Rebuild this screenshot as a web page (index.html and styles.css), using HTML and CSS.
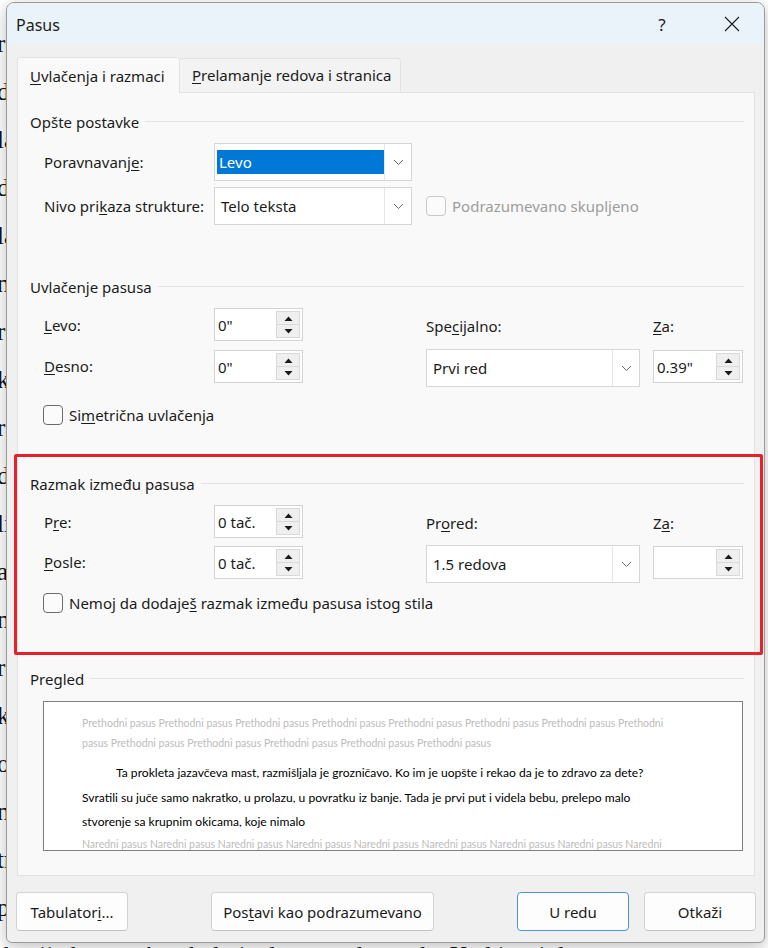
FILE: index.html
```html
<!DOCTYPE html>
<html lang="sr">
<head>
<meta charset="utf-8">
<title>Pasus</title>
<link rel="stylesheet" href="styles.css">
</head>
<body>
<div class="doc">
  <div>rođena, znala je to. Otišli su da vide bebu u nedelju po podne,</div>
  <div>dok je sunce još bilo visoko nad krovovima kuća u ulici.</div>
  <div>lako, kao da to nije ništa, a ona je sve vreme ćutala.</div>
  <div>dugo je posle gledala kroz prozor i razmišljala o svemu.</div>
  <div>la je da će sve proći, da je to samo obična prehlada.</div>
  <div>ne, rekla je, nije to ništa strašno, proći će do jutra.</div>
  <div>reka je tekla sporo ispod mosta, mutna i hladna.</div>
  <div>kasno je stigla kući, umorna i zabrinuta za dete.</div>
  <div>rano ujutru je ustala i odmah otišla do kolevke.</div>
  <div>dete je spavalo mirno, ali je disalo teško i brzo.</div>
  <div>lice mu je bilo crveno i vrelo pod njenom rukom.</div>
  <div>a onda je shvatila da mora odmah nešto da uradi.</div>
  <div>nije bilo nikoga da pita za savet, bila je sama.</div>
  <div>rekla je sebi da ne sme da se uplaši, ne sada.</div>
  <div>kao da je neko drugi umesto nje donosio odluke.</div>
  <div>obukla je dete toplo i umotala ga u ćebe.</div>
  <div>napolju je duvao vetar i padala je sitna kiša.</div>
  <div>trebalo je stići do lekara pre nego što bude kasno.</div>
  <div>put je bio dug, a autobus je kasnio kao i uvek.</div>
  <div>da nije kasno. A trebalo je dva sata do grada. Kad je stigla</div>
</div>

<div class="dialog">
  <div class="titlebar">
    <span class="title">Pasus</span>
    <span class="help">?</span>
    <span class="close">
      <svg width="18" height="18" viewBox="0 0 18 18"><path d="M2 2 L16 16 M16 2 L2 16" stroke="#1b1b1b" stroke-width="1.1" fill="none"/></svg>
    </span>
  </div>

  <div class="body">
    <div class="tabs">
      <div class="tab active"><u>U</u>vlačenja i razmaci</div>
      <div class="tab"><u>P</u>relamanje redova i stranica</div>
    </div>

    <div class="panel">
      <!-- Opšte postavke -->
      <div class="ghead g1h"><span>Opšte postavke</span></div>
      <div class="row r38 g1a">
        <span class="lbl">Poravnavanj<u>e</u>:</span>
        <div class="combo c198 c-span">
          <span class="val"><span class="selected">Levo</span></span>
          <span class="drop"><svg width="11" height="7" viewBox="0 0 11 7"><path d="M1 1 L5.5 5.5 L10 1" stroke="#6a6a6a" stroke-width="1" fill="none"/></svg></span>
        </div>
      </div>
      <div class="row r38 g1b">
        <span class="lbl">Nivo pri<u>k</u>aza strukture:</span>
        <div class="combo c198 c-span">
          <span class="val">Telo teksta</span>
          <span class="drop"><svg width="11" height="7" viewBox="0 0 11 7"><path d="M1 1 L5.5 5.5 L10 1" stroke="#6a6a6a" stroke-width="1" fill="none"/></svg></span>
        </div>
        <label class="chk disabled wide4"><span class="box"></span><span class="ctext">Podrazumevano skupljeno</span></label>
      </div>

      <!-- Uvlačenje pasusa -->
      <div class="ghead g2h"><span>Uvlačenje pasusa</span></div>
      <div class="row r33 g2a">
        <span class="lbl"><u>L</u>evo:</span>
        <div class="spin s89">
          <span class="sval">0"</span>
          <span class="sbtns">
            <span class="sb"><svg width="9" height="5" viewBox="0 0 9 5"><path d="M0.5 5 L4.5 0.5 L8.5 5 Z" fill="#1b1b1b"/></svg></span>
            <span class="sb"><svg width="9" height="5" viewBox="0 0 9 5"><path d="M0.5 0 L4.5 4.5 L8.5 0 Z" fill="#1b1b1b"/></svg></span>
          </span>
        </div>
        <span class="lbl c4 hl">Spe<u>c</u>ijalno:</span>
        <span class="lbl c6 hl"><u>Z</u>a:</span>
      </div>
      <div class="row r38 g2b">
        <span class="lbl up"><u>D</u>esno:</span>
        <div class="spin s89 top1">
          <span class="sval">0"</span>
          <span class="sbtns">
            <span class="sb"><svg width="9" height="5" viewBox="0 0 9 5"><path d="M0.5 5 L4.5 0.5 L8.5 5 Z" fill="#1b1b1b"/></svg></span>
            <span class="sb"><svg width="9" height="5" viewBox="0 0 9 5"><path d="M0.5 0 L4.5 4.5 L8.5 0 Z" fill="#1b1b1b"/></svg></span>
          </span>
        </div>
        <div class="combo c214 c4">
          <span class="val">Prvi red</span>
          <span class="drop"><svg width="11" height="7" viewBox="0 0 11 7"><path d="M1 1 L5.5 5.5 L10 1" stroke="#6a6a6a" stroke-width="1" fill="none"/></svg></span>
        </div>
        <div class="spin s90 top1 c6">
          <span class="sval">0.39"</span>
          <span class="sbtns">
            <span class="sb"><svg width="9" height="5" viewBox="0 0 9 5"><path d="M0.5 5 L4.5 0.5 L8.5 5 Z" fill="#1b1b1b"/></svg></span>
            <span class="sb"><svg width="9" height="5" viewBox="0 0 9 5"><path d="M0.5 0 L4.5 4.5 L8.5 0 Z" fill="#1b1b1b"/></svg></span>
          </span>
        </div>
      </div>
      <div class="row r20 g2c">
        <label class="chk chk-row"><span class="box"></span><span class="ctext">Si<u>m</u>etrična uvlačenja</span></label>
      </div>

      <!-- Razmak između pasusa -->
      <div class="ghead g3h"><span>Razmak između pasusa</span></div>
      <div class="row r33 g3a">
        <span class="lbl">P<u>r</u>e:</span>
        <div class="spin s89">
          <span class="sval">0 tač.</span>
          <span class="sbtns">
            <span class="sb"><svg width="9" height="5" viewBox="0 0 9 5"><path d="M0.5 5 L4.5 0.5 L8.5 5 Z" fill="#1b1b1b"/></svg></span>
            <span class="sb"><svg width="9" height="5" viewBox="0 0 9 5"><path d="M0.5 0 L4.5 4.5 L8.5 0 Z" fill="#1b1b1b"/></svg></span>
          </span>
        </div>
        <span class="lbl c4 hl">Pr<u>o</u>red:</span>
        <span class="lbl c6 hl">Z<u>a</u>:</span>
      </div>
      <div class="row r38 g3b">
        <span class="lbl up"><u>P</u>osle:</span>
        <div class="spin s89 top1">
          <span class="sval">0 tač.</span>
          <span class="sbtns">
            <span class="sb"><svg width="9" height="5" viewBox="0 0 9 5"><path d="M0.5 5 L4.5 0.5 L8.5 5 Z" fill="#1b1b1b"/></svg></span>
            <span class="sb"><svg width="9" height="5" viewBox="0 0 9 5"><path d="M0.5 0 L4.5 4.5 L8.5 0 Z" fill="#1b1b1b"/></svg></span>
          </span>
        </div>
        <div class="combo c214 c4">
          <span class="val">1.5 redova</span>
          <span class="drop"><svg width="11" height="7" viewBox="0 0 11 7"><path d="M1 1 L5.5 5.5 L10 1" stroke="#6a6a6a" stroke-width="1" fill="none"/></svg></span>
        </div>
        <div class="spin s90 top1 c6">
          <span class="sval"></span>
          <span class="sbtns">
            <span class="sb"><svg width="9" height="5" viewBox="0 0 9 5"><path d="M0.5 5 L4.5 0.5 L8.5 5 Z" fill="#1b1b1b"/></svg></span>
            <span class="sb"><svg width="9" height="5" viewBox="0 0 9 5"><path d="M0.5 0 L4.5 4.5 L8.5 0 Z" fill="#1b1b1b"/></svg></span>
          </span>
        </div>
      </div>
      <div class="row r20 g3c">
        <label class="chk chk-row"><span class="box"></span><span class="ctext">Nemoj da dodaje<u>š</u> razmak između pasusa istog stila</span></label>
      </div>

      <!-- Pregled -->
      <div class="ghead g4h"><span>Pregled</span></div>
      <div class="preview">
        <div class="pv-prev">
          <div>Prethodni pasus Prethodni pasus Prethodni pasus Prethodni pasus Prethodni pasus Prethodni pasus Prethodni pasus Prethodni</div>
          <div>pasus Prethodni pasus Prethodni pasus Prethodni pasus Prethodni pasus Prethodni pasus</div>
        </div>
        <div class="pv-main">
          <div class="first">Ta prokleta jazavčeva mast, razmišljala je grozničavo. Ko im je uopšte i rekao da je to zdravo za dete?</div>
          <div>Svratili su juče samo nakratko, u prolazu, u povratku iz banje. Tada je prvi put i videla bebu, prelepo malo</div>
          <div>stvorenje sa krupnim okicama, koje nimalo</div>
        </div>
        <div class="pv-next">
          <div>Naredni pasus Naredni pasus Naredni pasus Naredni pasus Naredni pasus Naredni pasus Naredni pasus Naredni pasus Naredni</div>
        </div>
      </div>
    </div>
  </div>

  <div class="footer">
    <button class="btn w112">Tabulator<u>i</u>...</button>
    <button class="btn w223">Pos<u>t</u>avi kao podrazumevano</button>
    <button class="btn w112 primary push">U redu</button>
    <button class="btn w112">Otkaži</button>
  </div>

  <div class="highlight"></div>
</div>
</body>
</html>
```

FILE: styles.css
```css
* { box-sizing: border-box; }

html, body {
  margin: 0;
  padding: 0;
  width: 768px;
  height: 948px;
  overflow: hidden;
  background: #ffffff;
}

body {
  position: relative;
  font-family: "Noto Sans", "Open Sans", sans-serif;
  color: #1b1b1b;
}

u { text-decoration-thickness: 1px; text-underline-offset: 2px; }

/* document behind the dialog */
.doc {
  font-family: "Liberation Serif", serif;
  font-size: 25px;
  line-height: 48px;
  padding-top: 20px;
  margin-left: -3px;
  color: #111;
  white-space: nowrap;
}

/* dialog */
.dialog {
  position: absolute;
  left: 6px;
  top: 2px;
  width: 759px;
  height: 941px;
  background: #f0f0f0;
  border: 1px solid #9a9a9a;
  border-radius: 8px 8px 6px 6px;
  box-shadow: 0 4px 16px rgba(0,0,0,0.25);
  overflow: hidden;
  display: flex;
  flex-direction: column;
}

.titlebar {
  height: 42px;
  flex: none;
  background: #eaf2fa;
  display: flex;
  align-items: center;
  padding-left: 9px;
}
.title { font-size: 16px; flex: 1; padding-top: 1px; }
.help { font-size: 17px; width: 70px; text-align: center; margin-right: 12px; }
.close { width: 46px; display: flex; justify-content: center; margin-right: 9px; }

.body {
  flex: 1;
  padding: 12px 9px 0 10px;
  display: flex;
  flex-direction: column;
}

.tabs { display: flex; align-items: flex-end; height: 35px; }
.tab {
  height: 34px;
  padding-left: 12px;
  font-size: 15px;
  line-height: 33px;
  border: 1px solid #e2e2e2;
  border-bottom: none;
  background: #f3f3f3;
  border-radius: 3px 3px 0 0;
  width: 222px;
  white-space: nowrap;
}
.tab.active {
  width: 162px;
  height: 36px;
  background: #f9f9f9;
  margin-bottom: -1px;
  position: relative;
  z-index: 1;
  line-height: 36px;
  border-right: none;
}

.panel {
  height: 784px;
  background: #f9f9f9;
  border: 1px solid #e2e2e2;
  padding: 0 10px 0 12px;
  font-size: 15px;
}

.ghead {
  display: flex;
  align-items: center;
  height: 20px;
  line-height: 20px;
}
.ghead span { padding-right: 6px; white-space: nowrap; }
.ghead::after {
  content: "";
  flex: 1;
  border-top: 1px solid #e3e3e3;
  margin-top: -1px;
}

.g1h { margin-top: 19px; }
.g1a { margin-top: 11px; }
.g1b { margin-top: 6px; }
.g2h { margin-top: 52px; }
.g2a { margin-top: 11px; }
.g2b { margin-top: 8px; }
.g2c { margin-top: 18px; }
.g3h { margin-top: 49px; }
.g3a { margin-top: 11px; }
.g3b { margin-top: 7px; }
.g3c { margin-top: 10px; }
.g4h { margin-top: 56px; }

.row {
  display: grid;
  grid-template-columns: 170px 89px 123px 214px 13px 90px;
  align-items: center;
  padding-left: 14px;
}
.r38 { height: 38px; }
.r33 { height: 33px; }
.r20 { height: 20px; }

.lbl { white-space: nowrap; grid-column: 1; }
.lbl.up { align-self: start; margin-top: 7px; }
.c4 { grid-column: 4; }
.lbl.c4 { grid-column: 4; }
.c6 { grid-column: 6; }
.lbl.c6 { grid-column: 6; }
.wide4 { grid-column: 4 / span 3; }
.hl { margin-top: 3px; }
.c-span { grid-column: 2 / span 2; }

/* combobox */
.combo {
  display: flex;
  height: 38px;
  background: #ffffff;
  border: 1px solid #d6d6d6;
}
.c198 { width: 198px; }
.c214 { width: 214px; }
.combo .val {
  flex: 1;
  display: flex;
  align-items: center;
  padding: 0 6px;
  white-space: nowrap;
}
.combo .drop {
  width: 27px;
  flex: none;
  border-left: 1px solid #e6e6e6;
  display: flex;
  align-items: center;
  justify-content: center;
}
.combo .val .selected {
  display: block;
  margin-left: -4px;
  margin-right: -6px;
  width: calc(100% + 10px);
  height: 24px;
  line-height: 24px;
  background: #0078d7;
  color: #ffffff;
  padding-left: 2px;
}

/* spinner */
.spin {
  display: flex;
  height: 33px;
  background: #ffffff;
  border: 1px solid #d3d3d3;
  padding: 2px;
}
.s89 { width: 89px; }
.s90 { width: 90px; }
.top1 { align-self: start; margin-top: 1px; }
.spin .sval {
  flex: 1;
  display: flex;
  align-items: center;
  padding-left: 1px;
  white-space: nowrap;
}
.sbtns {
  width: 24px;
  display: flex;
  flex-direction: column;
  border: 1px solid #d9d9d9;
  background: #efefef;
}
.sb {
  flex: 1;
  display: flex;
  align-items: center;
  justify-content: center;
}
.sb + .sb { border-top: 1px solid #d9d9d9; }

/* checkbox */
.chk {
  display: flex;
  align-items: center;
  white-space: nowrap;
}
.chk .box {
  width: 20px;
  height: 20px;
  border: 1px solid #6c6c6c;
  border-radius: 4px;
  background: #fbfbfb;
  margin-right: 6px;
  flex: none;
}
.chk.disabled { color: #9d9d9d; }
.chk.disabled .box { border-color: #c9c9c9; }
.chk-row { grid-column: 1 / -1; margin-left: -1px; }

/* preview */
.preview {
  margin: 12px 0 0 13px;
  width: 700px;
  height: 150px;
  background: #ffffff;
  border: 1px solid #7f7f7f;
  overflow: hidden;
  padding: 11px 0 0 38px;
  font-family: Lato, "Noto Sans", sans-serif;
  white-space: nowrap;
}
.pv-prev, .pv-next { color: #bcbcbc; line-height: 20px; font-size: 10.5px; }
.pv-main { color: #000000; line-height: 24.5px; margin-top: 8px; font-size: 12.1px; }
.pv-main .first { text-indent: 34px; }
.pv-next { line-height: 18px; }

/* footer buttons */
.footer {
  height: 66px;
  flex: none;
  display: flex;
  align-items: flex-start;
  padding: 16px 8px 0 9px;
}
.btn {
  height: 39px;
  font-family: "Noto Sans", "Open Sans", sans-serif;
  font-size: 15px;
  color: #1b1b1b;
  background: #fdfdfd;
  border: 1px solid #d3d3d3;
  border-bottom-color: #c4c4c4;
  border-radius: 4px;
  padding: 0;
  white-space: nowrap;
}
.w112 { width: 112px; }
.w223 { width: 223px; margin-left: 83px; }
.push { margin-left: auto; margin-right: 15px; }
.btn.primary { border: 1px solid #4a94dc; }

/* red annotation */
.highlight {
  position: absolute;
  left: 7px;
  top: 451px;
  width: 749px;
  height: 201px;
  border: 3px solid #e8202c;
  border-radius: 2px;
  pointer-events: none;
}
```
